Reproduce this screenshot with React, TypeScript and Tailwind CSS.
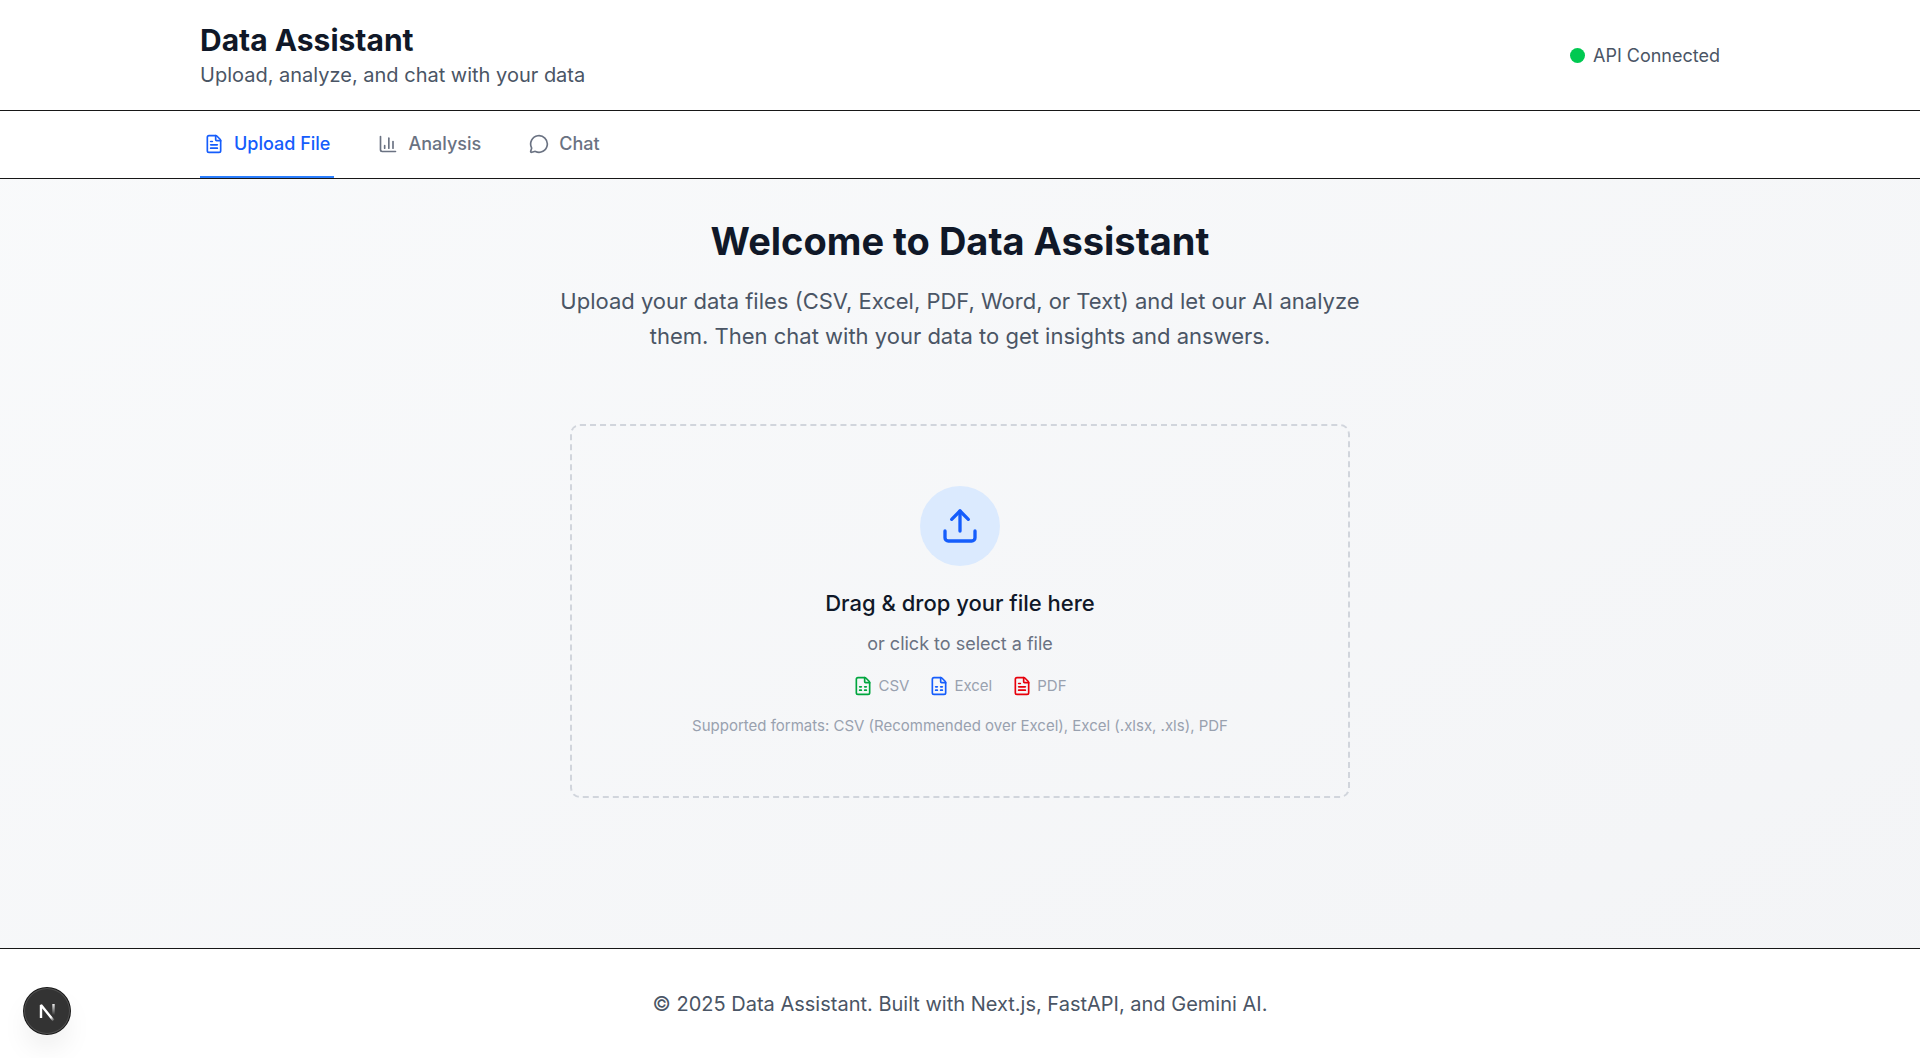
import { useState } from 'react';
import { ChartColumn, FileSpreadsheet, FileText, MessageCircle, Upload } from 'lucide-react';

const tabs = [
  { label: 'Upload File', icon: FileText },
  { label: 'Analysis', icon: ChartColumn },
  { label: 'Chat', icon: MessageCircle },
];

const formats = [
  { label: 'CSV', icon: FileSpreadsheet, color: 'text-green-600' },
  { label: 'Excel', icon: FileSpreadsheet, color: 'text-blue-600' },
  { label: 'PDF', icon: FileText, color: 'text-red-600' },
];

function Header() {
  return (
    <header className="border-b border-[#171717] bg-white">
      <div className="mx-auto flex max-w-[1600px] items-center justify-between px-10 py-5">
        <div>
          <h1 className="text-[30px] leading-10 font-bold text-gray-900">Data Assistant</h1>
          <p className="text-[20px] leading-[30px] text-gray-600">Upload, analyze, and chat with your data</p>
        </div>
        <div className="flex items-center gap-2">
          <span className="size-[15px] rounded-full bg-green-500" />
          <span className="text-[18px] leading-[25px] text-gray-600">API Connected</span>
        </div>
      </div>
    </header>
  );
}

function Tabs() {
  const [active, setActive] = useState('Upload File');
  return (
    <nav className="border-b border-[#171717] bg-white">
      <div className="mx-auto flex max-w-[1600px] gap-10 px-10">
        {tabs.map(({ label, icon: Icon }) => (
          <button
            key={label}
            type="button"
            onClick={() => setActive(label)}
            className={
              active === label
                ? 'flex items-center gap-2.5 border-b-2 border-blue-500 px-1 py-5 text-[18px] leading-[25px] font-medium text-blue-600'
                : 'flex items-center gap-2.5 border-b-2 border-transparent px-1 py-5 text-[18px] leading-[25px] font-medium text-gray-500'
            }
          >
            <Icon className="size-5" />
            {label}
          </button>
        ))}
      </div>
    </nav>
  );
}

function DevBadge() {
  return (
    <button
      type="button"
      aria-label="Open Next.js Dev Tools"
      className="fixed bottom-6 left-6 flex size-[46px] items-center justify-center rounded-full bg-[#333] shadow-[0_0_0_1px_#171717,inset_0_0_0_1px_rgba(255,255,255,0.14),0_16px_32px_-8px_rgba(0,0,0,0.14)]"
    >
      <svg className="size-6" viewBox="0 0 24 24" fill="none">
        <defs>
          <linearGradient id="diagonal" x1="11" y1="13" x2="19" y2="22" gradientUnits="userSpaceOnUse">
            <stop stopColor="#fff" />
            <stop offset="0.6" stopColor="#fff" />
            <stop offset="1" stopColor="#fff" stopOpacity="0" />
          </linearGradient>
          <linearGradient id="stem" x1="18" y1="4" x2="18" y2="16" gradientUnits="userSpaceOnUse">
            <stop stopColor="#fff" />
            <stop offset="1" stopColor="#fff" stopOpacity="0" />
          </linearGradient>
        </defs>
        <path d="M6 19V6L18.5 21.5" stroke="url(#diagonal)" strokeWidth="2.4" strokeLinejoin="bevel" />
        <path d="M18.5 5V16" stroke="url(#stem)" strokeWidth="2.4" />
      </svg>
    </button>
  );
}

export default function App() {
  return (
    <div className="flex min-h-screen flex-col bg-linear-to-br from-gray-50 to-gray-100 font-[Inter,sans-serif]">
      <Header />
      <Tabs />
      <main className="flex grow flex-col items-center py-10">
        <h2 className="text-[38px] leading-[45px] font-bold text-gray-900">Welcome to Data Assistant</h2>
        <p className="mt-5 max-w-[840px] text-center text-[22px] leading-[35px] text-gray-600">
          Upload your data files (CSV, Excel, PDF, Word, or Text) and let our AI analyze them. Then chat with your data to get insights and answers.
        </p>
        <button
          type="button"
          className="mt-[70px] flex w-full max-w-[780px] flex-col items-center rounded-[10px] border-2 border-dashed border-gray-300 py-15"
        >
          <span className="flex size-20 items-center justify-center rounded-full bg-blue-100 text-blue-600">
            <Upload className="size-10" />
          </span>
          <span className="mt-5 text-[22px] leading-[35px] font-medium text-gray-900">Drag &amp; drop your file here</span>
          <span className="mt-2.5 text-[18px] leading-[25px] text-gray-500">or click to select a file</span>
          <span className="mt-5 flex items-center gap-5">
            {formats.map(({ label, icon: Icon, color }) => (
              <span key={label} className="flex items-center gap-[5px] text-[15px] leading-5 text-gray-400">
                <Icon className={`size-5 ${color}`} />
                {label}
              </span>
            ))}
          </span>
          <span className="mt-5 text-[15px] leading-5 text-gray-400">
            Supported formats: CSV (Recommended over Excel), Excel (.xlsx, .xls), PDF
          </span>
        </button>
      </main>
      <footer className="border-t border-[#171717] bg-white pt-10 pb-[39px] text-center text-[20px] leading-[30px] text-gray-600">
        © 2025 Data Assistant. Built with Next.js, FastAPI, and Gemini AI.
      </footer>
      <DevBadge />
    </div>
  );
}
